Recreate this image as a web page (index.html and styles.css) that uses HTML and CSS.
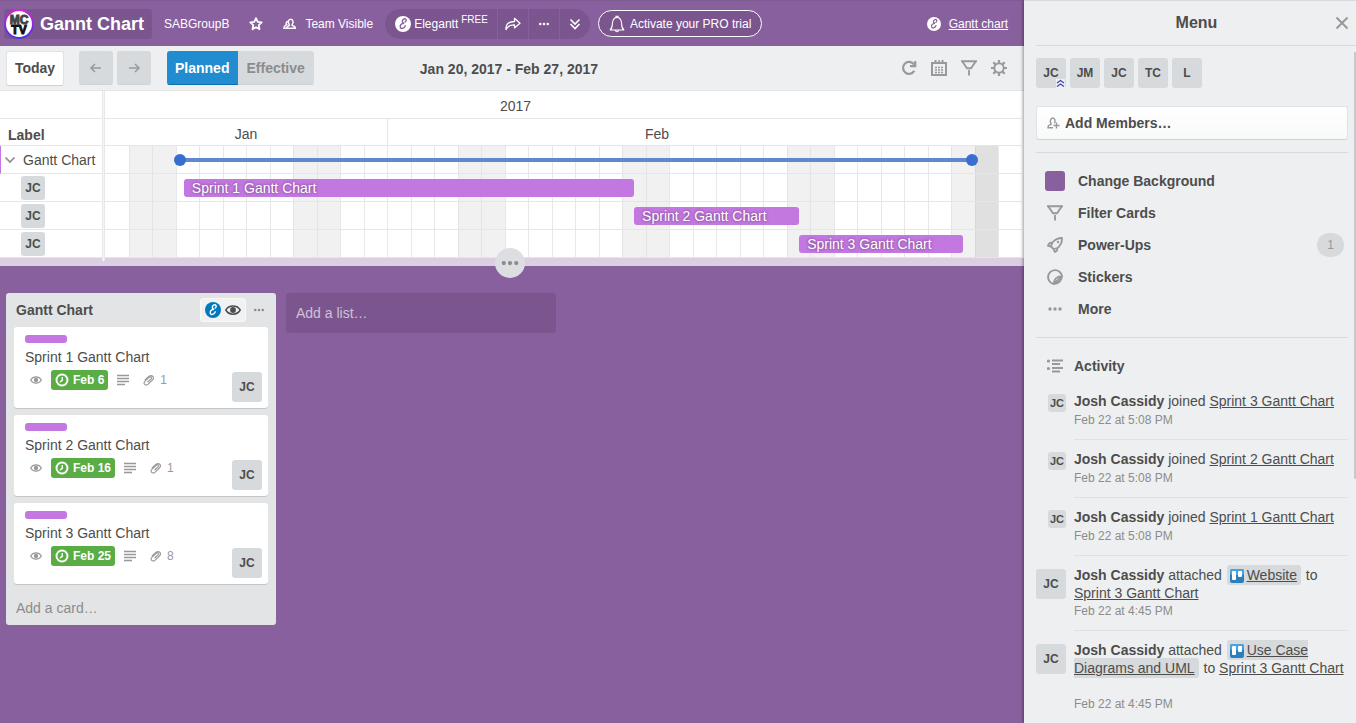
FILE: index.html
```html
<!DOCTYPE html>
<html lang="en">
<head>
<meta charset="utf-8">
<title>Gannt Chart</title>
<link rel="stylesheet" href="styles.css">
</head>
<body>
<svg class="sprite" aria-hidden="true">
  <symbol id="i-star" viewBox="0 0 16 16"><path d="M8 2.200l1.700 3.700 4 .5-3 2.800.8 4L8 11.300l-3.500 1.900.8-4-3-2.800 4-.5z" fill="none" stroke="currentColor" stroke-width="1.800" stroke-linejoin="round"/></symbol>
  <symbol id="i-team" viewBox="0 0 16 16"><path d="M7.200 9.500V8.300C5.800 7 6 3.300 8.700 3.300s2.900 3.700 1.500 5v1.200l2.200.9c.8.400.9 1 .9 1.900H4.700c0-.900.1-1.500.9-1.900zM6.200 5.200C4.200 5.200 3.800 7.200 4.700 8.600L3.200 9.700c-.9.500-1.200 1.200-1.200 2.600h3" fill="none" stroke="currentColor" stroke-width="1.500"/></symbol>
  <symbol id="i-e" viewBox="0 0 16 16"><circle cx="8" cy="8" r="8" fill="var(--disc)"/><path d="M10.200 6C12.600 4 10.500 2 8.600 3.200 6.700 4.400 6.900 7.100 9.200 7.200 6.300 7.300 4.800 9.300 5.300 11.200 5.900 13.400 9.200 12.600 10.300 9.800" fill="none" stroke="var(--mark)" stroke-width="1.400" stroke-linecap="round"/></symbol>
  <symbol id="i-share" viewBox="0 0 18 16"><path d="M2 13.500C1.500 8 4.500 5.500 10.500 5.500V2.300l5.500 5-5.500 4.600V8.800C6.500 8.600 4 9.800 2 13.500z" fill="none" stroke="currentColor" stroke-width="1.300" stroke-linejoin="round"/></symbol>
  <symbol id="i-dots" viewBox="0 0 16 16"><circle cx="3" cy="8" r="1.700"/><circle cx="8" cy="8" r="1.700"/><circle cx="13" cy="8" r="1.700"/></symbol>
  <symbol id="i-chevs" viewBox="0 0 16 16"><path d="M3.500 3.500L8 8l4.500-4.500M3.500 8L8 12.500 12.500 8" fill="none" stroke="currentColor" stroke-width="1.600"/></symbol>
  <symbol id="i-bell" viewBox="0 0 16 18"><path d="M.8 15h14.400M1 14.700C4 13 3 10 3.500 7.500 4 4.500 5.500 2.500 8 2.500s4 2 4.500 5c.5 2.500-.5 5.500 2.500 7.200M7 2.500V1.300h2v1.200M6.500 15.500c.2 1.700 2.800 1.700 3 0" fill="none" stroke="currentColor" stroke-width="1.100"/></symbol>
  <symbol id="i-left" viewBox="0 0 16 16"><path d="M13 8H3.500M7 4L3 8l4 4" fill="none" stroke="currentColor" stroke-width="1.500"/></symbol>
  <symbol id="i-right" viewBox="0 0 16 16"><path d="M3 8h9.500M9 4l4 4-4 4" fill="none" stroke="currentColor" stroke-width="1.500"/></symbol>
  <symbol id="i-reload" viewBox="0 0 16 16"><path d="M13.300 10.800A6 6 0 1 1 13 4.500M14.200 1v5.200H9" fill="none" stroke="currentColor" stroke-width="2.200"/></symbol>
  <symbol id="i-cal" viewBox="0 0 16 16"><path d="M1 3h14v12H1zM4.500 0v4M11.500 0v4" fill="none" stroke="currentColor" stroke-width="2"/><path d="M8 0v4" stroke="currentColor" stroke-width="1.500"/><path d="M4 7.500h8M4 10h8M4 12.500h8" stroke="currentColor" stroke-width="1.600" stroke-dasharray="2 1"/></symbol>
  <symbol id="i-filter" viewBox="0 0 16 16"><path d="M0 1.300h16M1.300 1.500L6 8.200h4l4.700-6.700M8 10v5.500" fill="none" stroke="currentColor" stroke-width="1.900"/></symbol>
  <symbol id="i-gear" viewBox="0 0 16 16"><circle cx="8" cy="8" r="4.700" fill="none" stroke="currentColor" stroke-width="1.900"/><path d="M8 0v3M8 13v3M0 8h3M13 8h3M2.300 2.300l2.200 2.200M11.500 11.500l2.200 2.200M2.300 13.700l2.200-2.200M11.500 4.500l2.200-2.200" stroke="currentColor" stroke-width="2.200"/></symbol>
  <symbol id="i-down" viewBox="0 0 12 12"><path d="M1.500 3.500L6 8l4.500-4.500" fill="none" stroke="currentColor" stroke-width="1.700"/></symbol>
  <symbol id="i-eye" viewBox="0 0 16 12"><path d="M.8 6C4 .5 12 .5 15.200 6 12 11.500 4 11.500.8 6z" fill="none" stroke="currentColor" stroke-width="1.500"/><circle cx="8" cy="6" r="2.900"/></symbol>
  <symbol id="i-clock" viewBox="0 0 14 14"><circle cx="7" cy="7" r="5.500" fill="none" stroke="currentColor" stroke-width="1.900"/><path d="M7.300 4v3.400L5 9" fill="none" stroke="currentColor" stroke-width="1.500"/></symbol>
  <symbol id="i-desc" viewBox="0 0 12 12"><path d="M0 1.500h12M0 4.500h12M0 7.500h12M0 10.500h8" stroke="currentColor" stroke-width="1.500"/></symbol>
  <symbol id="i-clip" viewBox="0 0 12 12"><path d="M1.800 6.300l4-3.800c2.800-2.400 6.400.6 3.800 3.300L5.200 10.100c-2.700 2.300-5.500-.6-3.400-2.800l4.300-4.100c1.600-1.300 3.200.4 1.900 1.700L4.500 8.200" fill="none" stroke="currentColor" stroke-width="1.200"/></symbol>
  <symbol id="i-close" viewBox="0 0 14 14"><path d="M1.500 1.500l11 11M12.500 1.500l-11 11" stroke="currentColor" stroke-width="2"/></symbol>
  <symbol id="i-adduser" viewBox="0 0 13 12"><path d="M6 10.800H1c0-1.700.3-2.400 1.200-2.700l1.800-.7V6.300C2.800 4.800 3.200 1 5.700 1s2.900 3.500 1.700 5.200M9.500 5.500v6M6.500 8.500h6" fill="none" stroke="currentColor" stroke-width="1.400"/></symbol>
  <symbol id="i-rocket" viewBox="0 0 16 16"><path d="M5.500 11L4 9.500 1 8.800C1.500 6.800 3 5.500 5.500 5.500 8 2.500 11 1 15 1c.2 4-1 7-4.500 10-.1 2.400-1 3.500-2.700 4L6.500 12zM5.500 5.500L4 9.500M10.500 11L6.500 12" fill="none" stroke="currentColor" stroke-width="1.800" stroke-linejoin="round"/><circle cx="11" cy="5" r="1.200"/></symbol>
  <symbol id="i-sticker" viewBox="0 0 16 16"><path d="M7 15A7 7 0 1 1 15 7L7 15C6.500 10.500 10 7 15 7 15 11 11.500 15 7 15z" fill="none" stroke="currentColor" stroke-width="1.900" stroke-linejoin="round"/></symbol>
  <symbol id="i-activity" viewBox="0 0 16 14"><path d="M5 1.500h11M5 5h8M5 9h11M5 12.500h8" stroke="currentColor" stroke-width="1.900"/><circle cx="1.500" cy="2" r="1.600"/><circle cx="1.500" cy="9.500" r="1.600"/></symbol>
  <symbol id="i-trello" viewBox="0 0 14 14"><rect width="14" height="14" rx="2" fill="#2b7fbd"/><rect width="14" height="6" rx="2" fill="#4aa3de"/><rect x="2" y="2" width="4" height="9" rx="1" fill="#fff"/><rect x="8" y="2" width="4" height="6" rx="1" fill="#fff"/></symbol>
  <symbol id="i-rank" viewBox="0 0 9 9"><path d="M1 4l3.500-2.500L8 4M1 7.500L4.500 5 8 7.500" fill="none" stroke="#4242b5" stroke-width="1.200"/></symbol>
</svg>

<main class="main">
  <header class="top">
    <a class="board-name" href="#">
      <svg class="logo" viewBox="0 0 30 30"><defs><linearGradient id="ring" x1="0" y1="0" x2="0" y2="1"><stop offset="0" stop-color="#d424d8"/><stop offset="1" stop-color="#4a30e8"/></linearGradient></defs><circle cx="15" cy="15" r="14" fill="#fff" stroke="url(#ring)" stroke-width="2"/><text x="15" y="15" class="logo-text logo-top">MC</text><text x="15" y="25" class="logo-text">TV</text></svg>
      <span>Gannt Chart</span>
    </a>
    <a class="top-link org" href="#">SABGroupB</a>
    <button class="top-link star" aria-label="Star"><svg class="ic16"><use href="#i-star"/></svg></button>
    <a class="top-link vis" href="#"><svg class="ic16"><use href="#i-team"/></svg>Team Visible</a>
    <div class="pill">
      <button class="pill-main"><svg class="ic16"><use href="#i-e"/></svg><span>Elegantt</span><small>FREE</small></button>
      <button aria-label="Share"><svg class="ic-share"><use href="#i-share"/></svg></button>
      <button aria-label="More"><svg class="ic12"><use href="#i-dots"/></svg></button>
      <button aria-label="Expand"><svg class="ic16"><use href="#i-chevs"/></svg></button>
    </div>
    <button class="trial"><svg class="ic-bell"><use href="#i-bell"/></svg>Activate your PRO trial</button>
    <a class="gantt-link" href="#"><svg class="ic14"><use href="#i-e"/></svg><span>Gantt chart</span></a>
  </header>

  <section class="gantt">
    <div class="tools">
      <button class="today">Today</button>
      <div class="nav">
        <button aria-label="Previous"><svg class="ic16"><use href="#i-left"/></svg></button>
        <button aria-label="Next"><svg class="ic16"><use href="#i-right"/></svg></button>
      </div>
      <div class="switch"><button class="on">Planned</button><button>Effective</button></div>
      <strong class="range">Jan 20, 2017 - Feb 27, 2017</strong>
      <div class="actions">
        <button aria-label="Reload"><svg class="ic16"><use href="#i-reload"/></svg></button>
        <button aria-label="Calendar"><svg class="ic16"><use href="#i-cal"/></svg></button>
        <button aria-label="Filter"><svg class="ic16"><use href="#i-filter"/></svg></button>
        <button aria-label="Settings"><svg class="ic16"><use href="#i-gear"/></svg></button>
      </div>
    </div>
    <div class="chart">
      <div class="labels">
        <div class="head-year"></div>
        <div class="head-month">Label</div>
        <div class="row group"><svg class="ic12"><use href="#i-down"/></svg>Gantt Chart</div>
        <div class="row who"><span class="avatar a24">JC</span></div>
        <div class="row who"><span class="avatar a24">JC</span></div>
        <div class="row who"><span class="avatar a24">JC</span></div>
      </div>
      <div class="divider"></div>
      <div class="time">
        <div class="head-year">2017</div>
        <div class="head-month months"><span>Jan</span><span>Feb</span></div>
        <div class="tracks">
          <div class="days">
            <i></i><i class="we"></i><i class="we"></i><i></i><i></i><i></i><i></i><i></i><i class="we"></i><i class="we"></i><i></i><i></i><i></i><i></i><i></i><i class="we"></i><i class="we"></i><i></i><i></i><i></i><i></i><i></i><i class="we"></i><i class="we"></i><i></i><i></i><i></i><i></i><i></i><i class="we"></i><i class="we"></i><i></i><i></i><i></i><i></i><i></i><i class="we"></i><i class="now"></i><i></i>
          </div>
          <div class="row"><div class="span" style="margin-left:8.2%;width:86.4%"></div></div>
          <div class="row"><div class="bar" style="margin-left:8.6%;width:49.1%">Sprint 1 Gantt Chart</div></div>
          <div class="row"><div class="bar" style="margin-left:57.7%;width:18%">Sprint 2 Gantt Chart</div></div>
          <div class="row"><div class="bar" style="margin-left:75.7%;width:17.9%">Sprint 3 Gantt Chart</div></div>
        </div>
      </div>
    </div>
    <div class="resize"><button class="grip" aria-label="Resize"><svg class="ic-grip"><use href="#i-dots"/></svg></button></div>
  </section>

  <section class="board">
    <div class="list">
      <div class="list-head">
        <h2>Gantt Chart</h2>
        <button class="watch" aria-label="Elegantt visibility"><svg class="ic16 blue"><use href="#i-e"/></svg><svg class="ic-eye"><use href="#i-eye"/></svg></button>
        <button class="list-more" aria-label="List actions"><svg class="ic12"><use href="#i-dots"/></svg></button>
      </div>
      <article class="card">
        <div class="tag"></div>
        <a class="title" href="#">Sprint 1 Gantt Chart</a>
        <div class="badges"><svg class="ic12 seen"><use href="#i-eye"/></svg><span class="due"><svg class="ic14"><use href="#i-clock"/></svg>Feb 6</span><svg class="ic12"><use href="#i-desc"/></svg><span class="att"><svg class="ic12"><use href="#i-clip"/></svg>1</span></div>
        <span class="avatar a30 owner">JC</span>
      </article>
      <article class="card">
        <div class="tag"></div>
        <a class="title" href="#">Sprint 2 Gantt Chart</a>
        <div class="badges"><svg class="ic12 seen"><use href="#i-eye"/></svg><span class="due"><svg class="ic14"><use href="#i-clock"/></svg>Feb 16</span><svg class="ic12"><use href="#i-desc"/></svg><span class="att"><svg class="ic12"><use href="#i-clip"/></svg>1</span></div>
        <span class="avatar a30 owner">JC</span>
      </article>
      <article class="card">
        <div class="tag"></div>
        <a class="title" href="#">Sprint 3 Gantt Chart</a>
        <div class="badges"><svg class="ic12 seen"><use href="#i-eye"/></svg><span class="due"><svg class="ic14"><use href="#i-clock"/></svg>Feb 25</span><svg class="ic12"><use href="#i-desc"/></svg><span class="att"><svg class="ic12"><use href="#i-clip"/></svg>8</span></div>
        <span class="avatar a30 owner">JC</span>
      </article>
      <button class="add-card">Add a card…</button>
    </div>
    <button class="add-list">Add a list…</button>
  </section>
</main>

<aside class="menu">
  <div class="menu-head"><h1>Menu</h1><button class="close" aria-label="Close"><svg class="ic14"><use href="#i-close"/></svg></button></div>
  <div class="menu-body">
    <div class="members">
      <span class="avatar a30">JC<svg class="rank"><use href="#i-rank"/></svg></span><span class="avatar a30">JM</span><span class="avatar a30">JC</span><span class="avatar a30">TC</span><span class="avatar a30">L</span>
    </div>
    <button class="add-members"><svg class="ic-add"><use href="#i-adduser"/></svg>Add Members…</button>
    <nav class="menu-nav">
      <a href="#"><span class="swatch"></span>Change Background</a>
      <a href="#"><svg class="ic16"><use href="#i-filter"/></svg>Filter Cards</a>
      <a href="#"><svg class="ic16"><use href="#i-rocket"/></svg>Power-Ups<span class="count">1</span></a>
      <a href="#"><svg class="ic16"><use href="#i-sticker"/></svg>Stickers</a>
      <a href="#"><svg class="ic16"><use href="#i-dots"/></svg>More</a>
    </nav>
    <h3 class="activity"><svg class="ic-act"><use href="#i-activity"/></svg>Activity</h3>
    <div class="feed">
      <div class="entry small"><span class="avatar a18">JC</span><div class="what"><b>Josh Cassidy</b> joined <a href="#">Sprint 3 Gantt Chart</a><time>Feb 22 at 5:08 PM</time></div></div>
      <div class="entry small"><span class="avatar a18">JC</span><div class="what"><b>Josh Cassidy</b> joined <a href="#">Sprint 2 Gantt Chart</a><time>Feb 22 at 5:08 PM</time></div></div>
      <div class="entry small"><span class="avatar a18">JC</span><div class="what"><b>Josh Cassidy</b> joined <a href="#">Sprint 1 Gantt Chart</a><time>Feb 22 at 5:08 PM</time></div></div>
      <div class="entry"><span class="avatar a30">JC</span><div class="what"><b>Josh Cassidy</b> attached <span class="file"><svg class="ic14"><use href="#i-trello"/></svg> <a href="#">Website</a></span> to <a href="#">Sprint 3 Gantt Chart</a><time>Feb 22 at 4:45 PM</time></div></div>
      <div class="entry last"><span class="avatar a30">JC</span><div class="what"><b>Josh Cassidy</b> attached <span class="file"><svg class="ic14"><use href="#i-trello"/></svg> <a href="#">Use Case Diagrams and UML</a></span> to <a href="#">Sprint 3 Gantt Chart</a><time>Feb 22 at 4:45 PM</time></div></div>
    </div>
  </div>
  <div class="scroll"></div>
</aside>
</body>
</html>
```

FILE: styles.css
```css
* { box-sizing: border-box; }
body {
  margin: 0;
  min-height: 100vh;
  display: flex;
  overflow: hidden;
  background: #89609e;
  color: #4d4d4d;
  font: 14px/18px "Liberation Sans", Arial, sans-serif;
}
button { font: inherit; color: inherit; border: 0; padding: 0; background: none; }
a { color: inherit; }
svg { fill: currentColor; flex: none; display: block; }
.sprite { position: absolute; width: 0; height: 0; }
.ic12 { width: 12px; height: 12px; }
.ic14 { width: 14px; height: 14px; }
.ic16 { width: 16px; height: 16px; }
.ic-share { width: 18px; height: 16px; }
.ic-bell { width: 16px; height: 18px; }
.ic-eye { width: 16px; height: 12px; }
.ic-grip { width: 20px; height: 20px; }
.ic-add { width: 13px; height: 12px; }
.ic-act { width: 16px; height: 14px; }

.avatar {
  display: flex;
  align-items: center;
  justify-content: center;
  flex: none;
  border-radius: 3px;
  background: #d6dadc;
  font-weight: bold;
  font-size: 12px;
  position: relative;
}
.a18 { width: 18px; height: 18px; font-size: 11px; }
.a24 { width: 24px; height: 24px; }
.a30 { width: 30px; height: 30px; }

.main { flex: 1; min-width: 0; display: flex; flex-direction: column; }

/* board header */
.top {
  height: 46px;
  display: flex;
  align-items: center;
  padding: 0 16px 0 4px;
  border-top: 1px solid #7f5a93;
  color: #fff;
  font-size: 12px;
  white-space: nowrap;
  --disc: #fff;
  --mark: #89609e;
}
.top a { text-decoration: none; }
.board-name {
  display: flex;
  align-items: center;
  gap: 6px;
  height: 30px;
  padding-right: 8px;
  border-radius: 3px;
  background: #7b568e;
  font-size: 18px;
  font-weight: bold;
}
.logo { width: 30px; height: 30px; }
.logo-text { font: bold 12px "Liberation Sans", Arial, sans-serif; text-anchor: middle; fill: #111; stroke: #111; stroke-width: 1; }
.logo-top { fill: #444; stroke: #444; }
.org { margin-left: 12px; }
.star { margin-left: 19px; }
.vis { display: flex; align-items: center; gap: 7px; margin-left: 18px; }
.pill { display: flex; height: 30px; margin-left: 12px; border-radius: 15px; background: #7b568e; overflow: hidden; }
.pill button { display: flex; align-items: center; justify-content: center; width: 31px; border-left: 1px solid #89609e; }
.pill .pill-main { width: auto; padding: 0 9px 0 10px; gap: 3px; border-left: 0; }
.pill small { font-size: 10px; line-height: 18px; align-self: flex-start; padding-top: 2px; }
.trial {
  display: flex;
  align-items: center;
  gap: 5px;
  height: 27px;
  margin-left: 8px;
  padding: 0 10px;
  border: 1px solid #fff;
  border-radius: 14px;
  background: #7b568e;
}
.gantt-link { display: flex; align-items: center; gap: 8px; margin-left: auto; }
.gantt-link span { text-decoration: underline; }

/* timeline */
.gantt { background: #fff; }
.tools {
  display: flex;
  align-items: center;
  height: 45px;
  padding: 0 17px 0 6px;
  background: #edeff0;
  border-bottom: 1px solid #e6e6e6;
  font-weight: bold;
}
.today { width: 58px; height: 35px; border: 1px solid #e0e2e3; border-bottom-color: #cfd2d3; border-radius: 3px; background: #fff; }
.nav { display: flex; gap: 4px; margin-left: 15px; color: #999; }
.nav button { width: 34px; height: 34px; border-radius: 3px; background: #d6dadc; border-bottom: 1px solid #cdd2d4; display: grid; place-items: center; }
.switch { display: flex; margin-left: 16px; height: 34px; border-radius: 3px; overflow: hidden; background: #d6dadc; color: #8c8c8c; }
.switch button { padding: 0 9px 0 8px; border-bottom: 1px solid #cdd2d4; }
.switch .on { background: #218ccf; color: #fff; border-bottom-color: #0b6fae; }
.range { margin: 0 auto 0 106px; padding-top: 2px; }
.actions { display: flex; gap: 14px; color: #999; }

.chart { display: flex; }
.labels { width: 102px; }
.divider { width: 3px; margin-bottom: -3px; background: #f5f5f5; border-left: 1px solid #e8e8e8; border-right: 1px solid #e8e8e8; position: relative; }
.time { flex: 1; min-width: 0; margin-right: 2px; }
.head-year, .head-month, .row { border-bottom: 1px solid #e6e6e6; }
.head-year { height: 28px; text-align: center; padding-top: 6px; padding-right: 96px; }
.head-month { height: 27px; padding-top: 7px; }
.labels .head-month { padding-left: 8px; font-weight: bold; }
.time .months { display: grid; grid-template-columns: 12fr 27fr; padding-top: 0; text-align: center; line-height: 30px; }
.months span + span { border-left: 1px solid #e6e6e6; padding-right: 96px; }
.row { height: 28px; padding-top: 5px; position: relative; }
.group { display: flex; align-items: center; gap: 7px; padding: 0 0 0 3px; border-left: 1px solid #c377e0; white-space: nowrap; }
.group svg { color: #8c8c8c; }
.who { padding: 2px 0 0 21px; }
.tracks { position: relative; }
.days { position: absolute; inset: 0; display: grid; grid-template-columns: repeat(39, 1fr); }
.days i { border-left: 1px solid #e8e8e8; }
.days i:first-child { border-left: 0; }
.days .we { background: #f1f1f1; border-color: #e4e4e4; }
.days .now { background: #e0e0e0; border-color: #d6d6d6; }
.bar { height: 18px; padding-left: 8px; border-radius: 3px; background: #c377e0; color: #fff; text-shadow: 0 0 3px rgba(0, 0, 0, .5); white-space: nowrap; }
.span { height: 4px; margin-top: 7px; background: #6187cf; position: relative; }
.span::before, .span::after { content: ""; position: absolute; top: -4px; width: 12px; height: 12px; border-radius: 50%; background: #3a6dd0; }
.span::before { left: -6px; }
.span::after { right: -6px; }
.resize { height: 8px; background: #dccfe1; display: flex; justify-content: center; padding-right: 4px; }
.grip { width: 30px; height: 30px; margin: -10px 0; border-radius: 50%; background: #dcdee1; color: #8c8c8c; display: grid; place-items: center; z-index: 1; }

/* board */
.board { display: flex; align-items: flex-start; gap: 10px; padding: 27px 6px; }
.list { width: 270px; padding: 0 8px; border-radius: 3px; background: #e2e4e6; }
.list-head { display: flex; align-items: center; height: 34px; padding-left: 2px; }
h1, h2, h3 { margin: 0; }
.list-head h2 { font-size: 14px; flex: 1; }
.watch { display: flex; align-items: center; justify-content: center; gap: 4px; width: 46px; height: 24px; border-radius: 3px; border: 1px solid #f8f8f9; background: #eff1f2; }
.blue { --disc: #0079bf; --mark: #fff; }
.list-more { color: #8c8c8c; margin: 0 3px 0 7px; }
.card { position: relative; height: 81px; margin-bottom: 7px; padding: 8px 11px; border-radius: 3px; background: #fff; box-shadow: 0 1px 0 #c4c6c8; }
.tag { width: 42px; height: 8px; border-radius: 3px; background: #c377e0; }
.title { display: block; margin: 5px 0 4px; text-decoration: none; }
.badges { display: flex; align-items: center; height: 20px; color: #999; font-size: 12px; }
.badges .seen { margin: 0 9px 0 5px; }
.due { display: flex; align-items: center; gap: 4px; height: 20px; padding: 0 4px; margin-right: 9px; border-radius: 3px; background: #5aac44; color: #fff; font-weight: bold; }
.att { display: flex; align-items: center; gap: 5px; margin-left: 14px; }
.owner { position: absolute; right: 6px; bottom: 6px; }
.add-card { display: block; padding: 8px 2px; color: #8c8c8c; }
.add-list { width: 270px; height: 40px; padding-left: 10px; border-radius: 3px; background: #7b568e; color: #d0c0d8; text-align: left; }

/* side menu */
.menu { width: 332px; height: 100vh; background: #edeff0; position: relative; overflow: hidden; border-top: 1px solid #d6dadc; box-shadow: -1px 0 3px rgba(0, 0, 0, .4); }
.menu-head { display: flex; align-items: center; height: 45px; margin-left: 12px; padding-right: 7px; border-bottom: 1px solid #d6dadc; }
.menu-head h1 { flex: 1; padding-left: 22px; font-size: 16px; text-align: center; }
.close { color: #999; }
.menu-body { padding: 12px 8px 0 12px; }
.members { display: flex; gap: 4px; }
.rank { position: absolute; right: 1px; bottom: 0; width: 9px; height: 9px; background: #edeff0; }
.add-members { display: flex; align-items: center; gap: 5px; width: 100%; height: 34px; margin-top: 18px; padding-left: 10px; border: 1px solid #e0e2e3; border-bottom-color: #cdd2d4; border-radius: 3px; background: linear-gradient(#fff, #f8f9f9); font-weight: bold; }
.add-members svg { color: #999; }
.menu-nav { margin-top: 12px; padding: 12px 0; border: 1px solid #d6dadc; border-width: 1px 0; }
.menu-nav a { display: flex; align-items: center; gap: 15px; height: 32px; padding: 0 4px 0 11px; font-weight: bold; text-decoration: none; }
.menu-nav svg { color: #999; }
.menu-nav .swatch { width: 20px; height: 20px; margin: 0 -2px; border-radius: 3px; background: #89609e; }
.count { width: 27px; height: 24px; margin-left: auto; border-radius: 12px; background: #d6dadc; color: #999; font-size: 12px; font-weight: normal; line-height: 24px; text-align: center; }
.activity { display: flex; align-items: center; gap: 11px; margin: 19px 0 7px 11px; font-size: 14px; }
.activity svg { color: #999; }
.entry { display: flex; gap: 8px; }
.entry .avatar { margin-top: 13px; }
.entry.small .avatar { margin: 12px 0 0 12px; }
.entry.small time { line-height: 20px; }
.entry.small .what { padding-bottom: 9px; }
.what { flex: 1; min-width: 0; padding: 10px 0; border-bottom: 1px solid #dfe2e4; }
.last .what { margin-right: -4px; }
time { display: block; color: #8c8c8c; font-size: 12px; line-height: 18px; }
.last time { margin-top: 18px; }
.file { background: #d6dadc; border-radius: 3px; padding: 2px 4px 2px 3px; margin: 0 1px; }
.file svg { display: inline-block; vertical-align: -3px; margin-right: -1px; }
.scroll { position: absolute; right: 0; top: 51px; width: 2px; height: 427px; background: #c4cacc; border-radius: 1px; }
```
